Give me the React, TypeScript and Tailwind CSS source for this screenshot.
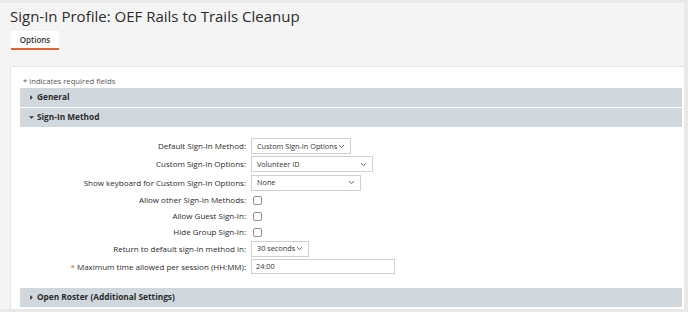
import React from 'react';

const font = { fontFamily: '"Open Sans", "Liberation Sans", sans-serif' };

const Chevron: React.FC = () => (
  <svg width="7" height="5" viewBox="0 0 7 5" fill="none" stroke="#555" strokeWidth="0.9" className="shrink-0">
    <path d="M1 1.2 L3.5 3.6 L6 1.2" />
  </svg>
);

const SelectBox: React.FC<{ value: string; width: string }> = ({ value, width }) => (
  <div className={`${width} h-[16px] border border-[#cfcfcf] bg-white flex items-center justify-between pl-[5px] pr-[5px] text-[7.3px] text-[#333] whitespace-nowrap overflow-hidden`}>
    <span>{value}</span>
    <Chevron />
  </div>
);

const CheckBox: React.FC = () => (
  <div className="w-[9px] h-[9px] border border-[#8f8f8f] rounded-[2px] bg-white ml-[2px]" />
);

const SectionBar: React.FC<{ title: string; open?: boolean }> = ({ title, open }) => (
  <div className="h-[19px] bg-[#d0d8de] flex items-center pl-[9px] gap-[3px] text-[8.3px] font-bold text-[#2b2b2b]">
    {open ? (
      <svg width="5" height="5" viewBox="0 0 6 6"><path d="M0 1.5 L6 1.5 L3 4.5 Z" fill="#333" /></svg>
    ) : (
      <svg width="5" height="5" viewBox="0 0 6 6"><path d="M1.5 0 L4.5 3 L1.5 6 Z" fill="#333" /></svg>
    )}
    <span>{title}</span>
  </div>
);

interface Row {
  label: string;
  required?: boolean;
  control: React.ReactNode;
  h: string;
}

const App: React.FC = () => {
  const rows: Row[] = [
    { label: 'Default Sign-In Method:', control: <SelectBox value="Custom Sign-In Options" width="w-[100px]" />, h: 'h-[18px]' },
    { label: 'Custom Sign-In Options:', control: <SelectBox value="Volunteer ID" width="w-[122px]" />, h: 'h-[18px]' },
    { label: 'Show keyboard for Custom Sign-In Options:', control: <SelectBox value="None" width="w-[110px]" />, h: 'h-[19px]' },
    { label: 'Allow other Sign-In Methods:', control: <CheckBox />, h: 'h-[16px]' },
    { label: 'Allow Guest Sign-In:', control: <CheckBox />, h: 'h-[16px]' },
    { label: 'Hide Group Sign-In:', control: <CheckBox />, h: 'h-[16px]' },
    { label: 'Return to default sign-in method in:', control: <SelectBox value="30 seconds" width="w-[58px]" />, h: 'h-[17px]' },
    {
      label: 'Maximum time allowed per session (HH:MM):',
      required: true,
      control: (
        <div className="w-[144px] h-[15px] border border-[#cfcfcf] bg-white flex items-center pl-[4px] text-[7.3px] text-[#333]">24:00</div>
      ),
      h: 'h-[19px]',
    },
  ];

  return (
    <div className="w-[688px] h-[312px] overflow-hidden bg-[#e9e9e9] pt-[3px] pr-[4px] pb-[3px]" style={font}>
      <div className="h-full bg-[#f4f4f4] pl-[10px] flex flex-col">
        <h1 className="text-[15px] leading-[20px] text-[#2b2b2b] mt-[3px]">Sign-In Profile: OEF Rails to Trails Cleanup</h1>
        <div className="flex mt-[5px]">
          <div className="ml-[1px] w-[48px] h-[19px] bg-white border-b-2 border-[#e2632b] flex items-center justify-center text-[8px] font-semibold text-[#333]">
            Options
          </div>
        </div>
        <div className="mt-[16px] flex-1 bg-white border-l border-t border-[#e6e6e6] pl-[9px] pr-[2px]">
          <p className="text-[7.7px] text-[#555] pt-[9px] pl-[3px] leading-[11px]">* indicates required fields</p>
          <div className="mt-[1px] flex flex-col gap-[1px]">
            <SectionBar title="General" />
            <SectionBar title="Sign-In Method" open />
          </div>
          <div className="pt-[10px] pb-[12px]">
            {rows.map((r) => (
              <div key={r.label} className={`flex items-center ${r.h}`}>
                <div className="w-[231px] text-right text-[8px] text-[#2b2b2b] pr-[5px] whitespace-nowrap">
                  {r.required && <span className="text-[#e2632b]">* </span>}
                  {r.label}
                </div>
                {r.control}
              </div>
            ))}
          </div>
          <SectionBar title="Open Roster (Additional Settings)" />
        </div>
      </div>
    </div>
  );
};

export default App;
